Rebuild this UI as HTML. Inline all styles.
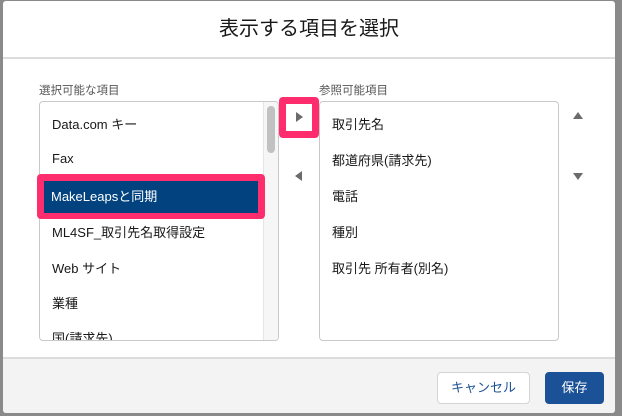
<!DOCTYPE html>
<html><head><meta charset="utf-8"><style>
*{margin:0;padding:0;box-sizing:border-box}
body{width:622px;height:416px;background:#8a8a8a;position:relative;overflow:hidden;font-family:"Liberation Sans","Noto Sans CJK JP",sans-serif;color:#181818}
.modal{position:absolute;left:3px;top:1px;width:612px;height:412px;background:#fff;border-radius:3px;overflow:hidden}
.hdr{position:absolute;left:0;top:0;width:100%;height:58px;border-bottom:2px solid #dcdcdc;text-align:center;font-size:20px;line-height:56px;color:#181818}
.lbl{position:absolute;top:81px;font-size:11.5px;color:#555}
.box{position:absolute;top:100px;width:240px;height:240px;border:1px solid #c9c9c9;border-radius:4px;overflow:hidden;background:#fff}
.it{position:absolute;left:12px;font-size:13px;white-space:nowrap}
.footer{position:absolute;left:0;top:356px;width:100%;height:56px;background:#f3f3f3;border-top:2px solid #dcdcdc}
.btn{position:absolute;top:13px;height:32px;border-radius:4px;font-size:13px;line-height:30px;text-align:center}
.tri{position:absolute;width:0;height:0}
</style></head><body>
<div class="modal">
<div class="hdr">表示する項目を選択</div>
<div class="lbl" style="left:36px">選択可能な項目</div>
<div class="lbl" style="left:316px">参照可能項目</div>
<div class="box" style="left:36px">
 <div style="position:absolute;right:0;top:0;width:15px;height:100%;background:#f6f6f6;border-left:1px solid #e5e5e5"></div>
 <div style="position:absolute;right:3px;top:4px;width:8px;height:47px;background:#c1c1c1;border-radius:4px"></div>
 <div class="it" style="top:12px">Data.com キー</div>
 <div class="it" style="top:49px">Fax</div>
 <div class="it" style="top:120px">ML4SF_取引先名取得設定</div>
 <div class="it" style="top:156px">Web サイト</div>
 <div class="it" style="top:191px">業種</div>
 <div class="it" style="top:226px">国(請求先)</div>
</div>
<div style="position:absolute;left:34px;top:173px;width:228px;height:45px;background:#ff2d6e;border-radius:4px"></div>
<div style="position:absolute;left:41px;top:180px;width:214px;height:32px;background:#02437f;color:#fff;font-size:13px;line-height:31px;padding-left:7px">MakeLeapsと同期</div>
<div style="position:absolute;left:276px;top:96px;width:40px;height:41px;background:#ff2d6e;border-radius:4px"></div>
<div style="position:absolute;left:283px;top:103px;width:26px;height:27px;background:#fff"></div>
<div class="tri" style="left:293px;top:111px;border-left:7px solid #6b6b6b;border-top:5px solid transparent;border-bottom:5px solid transparent"></div>
<div class="tri" style="left:292px;top:170px;border-right:7px solid #6b6b6b;border-top:5px solid transparent;border-bottom:5px solid transparent"></div>
<div class="box" style="left:316px">
 <div class="it" style="top:12px">取引先名</div>
 <div class="it" style="top:48px">都道府県(請求先)</div>
 <div class="it" style="top:84px">電話</div>
 <div class="it" style="top:120px">種別</div>
 <div class="it" style="top:156px">取引先 所有者(別名)</div>
</div>
<div class="tri" style="left:570px;top:111px;border-bottom:7px solid #6b6b6b;border-left:5px solid transparent;border-right:5px solid transparent"></div>
<div class="tri" style="left:570px;top:172px;border-top:7px solid #6b6b6b;border-left:5px solid transparent;border-right:5px solid transparent"></div>
<div class="footer">
 <div class="btn" style="left:434px;width:93px;background:#fff;border:1px solid #d5d5d5;color:#1b5297">キャンセル</div>
 <div class="btn" style="left:542px;width:59px;background:#1b5297;color:#fff;border:1px solid #1b5297">保存</div>
</div>
</div>
</body></html>
